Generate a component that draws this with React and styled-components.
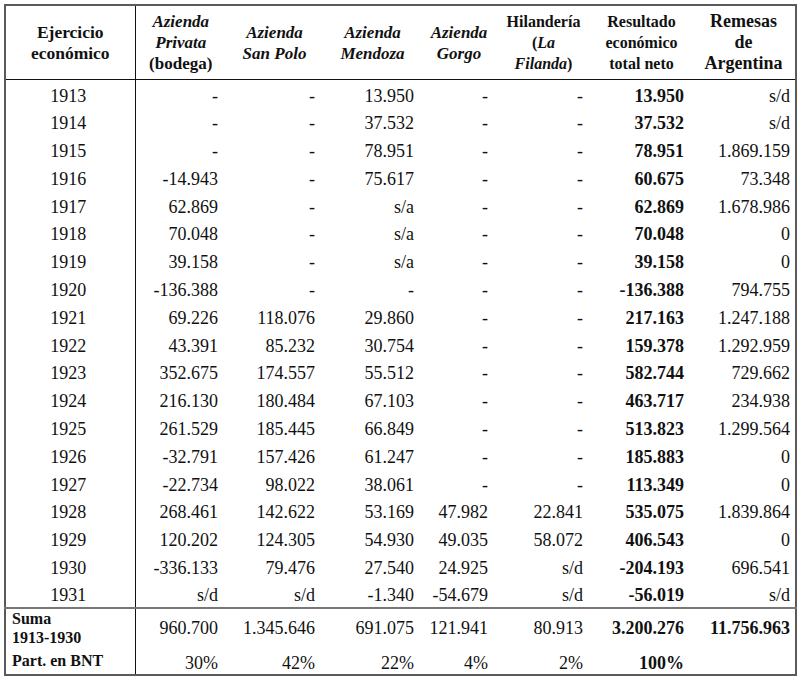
import React from "react";
import styled, { createGlobalStyle } from "styled-components";

const Global = createGlobalStyle`
  html, body { margin: 0; padding: 0; background: #fff; }
  body { font-family: "Liberation Serif", "Times New Roman", serif; color: #111; }
`;

const Wrap = styled.div`
  padding: 4px 0 0 4px;
`;

const Table = styled.table`
  border-collapse: collapse;
  table-layout: fixed;
  width: 791px;
  border: 2px solid #5a5a5a;
  font-family: "Liberation Serif", "Times New Roman", serif;
`;

const HeadCell = styled.th`
  font-size: ${(p) => p.$size ?? 17}px;
  line-height: 21px;
  font-weight: bold;
  font-style: ${(p) => (p.$italic ? "italic" : "normal")};
  text-align: center;
  vertical-align: middle;
  height: 73px;
  padding: 0 2px;
  border-bottom: 1px solid #111;
  border-right: ${(p) => (p.$first ? "1px solid #111" : "none")};
`;

const Row = styled.tr`
  height: ${(p) => p.$h}px;
`;

const Cell = styled.td`
  font-size: 18px;
  line-height: 20px;
  text-align: ${(p) => (p.$center ? "center" : "right")};
  font-weight: ${(p) => (p.$bold ? "bold" : "normal")};
  padding: ${(p) => (p.$sep ? 0 : 4)}px ${(p) => p.$pr ?? 8}px 0 4px;
  border-right: ${(p) => (p.$first ? "1px solid #111" : "none")};
  border-top: ${(p) => (p.$sep ? "2px solid #777" : "none")};
  vertical-align: middle;
  white-space: nowrap;
`;

const LabelCell = styled.td`
  font-size: 16px;
  line-height: 19px;
  font-weight: bold;
  text-align: left;
  padding: 0 4px 0 6px;
  border-right: 1px solid #111;
  border-top: ${(p) => (p.$sep ? "2px solid #777" : "none")};
  vertical-align: middle;
`;

const widths = [130, 91, 97, 99, 74, 95, 101, 104];
const pads = [0, 8, 8, 8, 8, 8, 8, 5];

const data = [
  ["1913", "-", "-", "13.950", "-", "-", "13.950", "s/d"],
  ["1914", "-", "-", "37.532", "-", "-", "37.532", "s/d"],
  ["1915", "-", "-", "78.951", "-", "-", "78.951", "1.869.159"],
  ["1916", "-14.943", "-", "75.617", "-", "-", "60.675", "73.348"],
  ["1917", "62.869", "-", "s/a", "-", "-", "62.869", "1.678.986"],
  ["1918", "70.048", "-", "s/a", "-", "-", "70.048", "0"],
  ["1919", "39.158", "-", "s/a", "-", "-", "39.158", "0"],
  ["1920", "-136.388", "-", "-", "-", "-", "-136.388", "794.755"],
  ["1921", "69.226", "118.076", "29.860", "-", "-", "217.163", "1.247.188"],
  ["1922", "43.391", "85.232", "30.754", "-", "-", "159.378", "1.292.959"],
  ["1923", "352.675", "174.557", "55.512", "-", "-", "582.744", "729.662"],
  ["1924", "216.130", "180.484", "67.103", "-", "-", "463.717", "234.938"],
  ["1925", "261.529", "185.445", "66.849", "-", "-", "513.823", "1.299.564"],
  ["1926", "-32.791", "157.426", "61.247", "-", "-", "185.883", "0"],
  ["1927", "-22.734", "98.022", "38.061", "-", "-", "113.349", "0"],
  ["1928", "268.461", "142.622", "53.169", "47.982", "22.841", "535.075", "1.839.864"],
  ["1929", "120.202", "124.305", "54.930", "49.035", "58.072", "406.543", "0"],
  ["1930", "-336.133", "79.476", "27.540", "24.925", "s/d", "-204.193", "696.541"],
  ["1931", "s/d", "s/d", "-1.340", "-54.679", "s/d", "-56.019", "s/d"],
];

export default function App() {
  return (
    <>
      <Global />
      <Wrap>
        <Table>
          <colgroup>
            {widths.map((w, i) => (
              <col key={i} style={{ width: w }} />
            ))}
          </colgroup>
          <thead>
            <tr>
              <HeadCell $first $size={17.5}>Ejercicio<br />económico</HeadCell>
              <HeadCell><i>Azienda<br />Privata</i><br />(bodega)</HeadCell>
              <HeadCell $italic>Azienda<br />San Polo</HeadCell>
              <HeadCell $italic>Azienda<br />Mendoza</HeadCell>
              <HeadCell $italic>Azienda<br />Gorgo</HeadCell>
              <HeadCell $size={16}>Hilandería<br />(<i>La</i><br /><i>Filanda</i>)</HeadCell>
              <HeadCell $size={16}>Resultado<br />económico<br />total neto</HeadCell>
              <HeadCell $size={18}>Remesas<br />de<br />Argentina</HeadCell>
            </tr>
          </thead>
          <tbody>
            {data.map((r) => (
              <Row key={r[0]} $h={27.8}>
                {r.map((v, i) =>
                  i === 0 ? (
                    <Cell key={i} $first $center>{v}</Cell>
                  ) : (
                    <Cell key={i} $bold={i === 6} $pr={pads[i]}>{v}</Cell>
                  )
                )}
              </Row>
            ))}
            <Row $h={40}>
              <LabelCell $sep>Suma<br />1913-1930</LabelCell>
              <Cell $sep>960.700</Cell>
              <Cell $sep>1.345.646</Cell>
              <Cell $sep>691.075</Cell>
              <Cell $sep>121.941</Cell>
              <Cell $sep>80.913</Cell>
              <Cell $sep $bold>3.200.276</Cell>
              <Cell $sep $bold $pr={5}>11.756.963</Cell>
            </Row>
            <Row $h={27}>
              <LabelCell>Part. en BNT</LabelCell>
              <Cell>30%</Cell>
              <Cell>42%</Cell>
              <Cell>22%</Cell>
              <Cell>4%</Cell>
              <Cell>2%</Cell>
              <Cell $bold>100%</Cell>
              <Cell $pr={5}></Cell>
            </Row>
          </tbody>
        </Table>
      </Wrap>
    </>
  );
}
